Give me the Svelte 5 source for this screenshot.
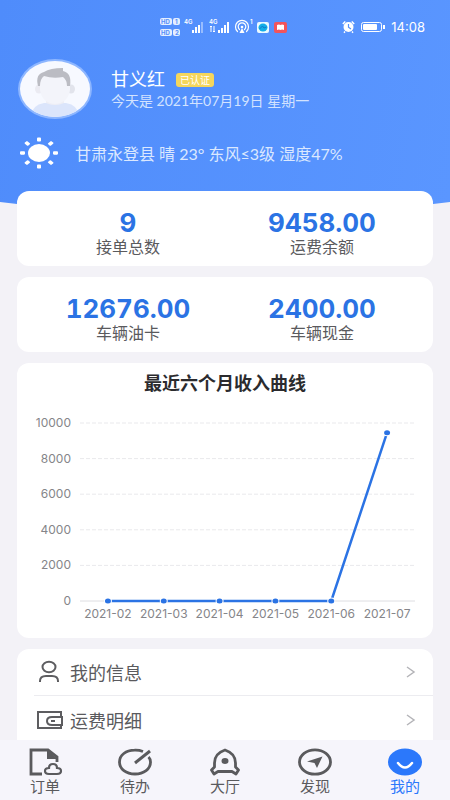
<script>
  const points = [
    { month: '2021-02', value: 0 },
    { month: '2021-03', value: 0 },
    { month: '2021-04', value: 0 },
    { month: '2021-05', value: 0 },
    { month: '2021-06', value: 0 },
    { month: '2021-07', value: 9458 }
  ];
  const ticks = [10000, 8000, 6000, 4000, 2000, 0];
  const left = 63;
  const right = 398;
  const top = 18;
  const base = 196;
  const step = (right - left) / points.length;
  const px = (i) => left + step * (i + 0.5);
  const py = (v) => base - ((base - top) * v) / 10000;
  const line = points.map((p, i) => `${px(i)},${py(p.value)}`).join(' ');

  const stats = [
    [
      { value: '9', label: '接单总数' },
      { value: '9458.00', label: '运费余额' }
    ],
    [
      { value: '12676.00', label: '车辆油卡' },
      { value: '2400.00', label: '车辆现金' }
    ]
  ];
  const menu = [
    { id: 'user', label: '我的信息' },
    { id: 'wallet', label: '运费明细' }
  ];
  const tabs = [
    { id: 'order', label: '订单' },
    { id: 'todo', label: '待办' },
    { id: 'hall', label: '大厅' },
    { id: 'find', label: '发现' },
    { id: 'mine', label: '我的' }
  ];
  const rays = [0, 45, 90, 135, 180, 225, 270, 315];
</script>

<div class="page">
  <header>
    <svg class="curve" viewBox="0 0 450 16" preserveAspectRatio="none" aria-hidden="true">
      <defs>
        <linearGradient id="sky">
          <stop offset="0" stop-color="#528ffc" />
          <stop offset="1" stop-color="#5a96ff" />
        </linearGradient>
      </defs>
      <path d="M0 0H450Q225 30 0 0Z" fill="url(#sky)" />
    </svg>

    <div class="status">
      <svg class="signals" width="130" height="22" viewBox="0 0 130 22" aria-hidden="true">
        <g fill="#e4eeff">
          <rect x="0" y="2" width="12" height="7" rx="2" />
          <rect x="13" y="2" width="7" height="7" rx="2" />
          <rect x="0" y="13" width="12" height="7" rx="2" />
          <rect x="13" y="13" width="7" height="7" rx="2" />
        </g>
        <g font-size="6" font-weight="700" fill="#5590fa">
          <text x="1" y="8">HD</text><text x="15" y="8">1</text>
          <text x="1" y="19">HD</text><text x="15" y="19">2</text>
        </g>
        <g font-size="6" font-weight="600" fill="#fff">
          <text x="24" y="8">4G</text><text x="49" y="8">4G</text><text x="90" y="8">1</text>
        </g>
        <g fill="#fff">
          <rect x="32" y="14" width="2" height="3" /><rect x="35" y="11" width="2" height="6" />
          <rect x="38" y="9" width="2" height="8" />
          <rect x="41" y="6" width="2" height="11" opacity=".4" />
          <rect x="58" y="14" width="2" height="3" /><rect x="61" y="12" width="2" height="5" />
          <rect x="64" y="9" width="2" height="8" /><rect x="67" y="6" width="2" height="11" />
        </g>
        <path d="M51 10v6m-1-5 1-1 1 1M54 10v6m-1-1 1 1 1-1" fill="none" stroke="#fff" />
        <g fill="none" stroke="#fff" stroke-width="1.2" stroke-linecap="round">
          <path d="M77.500 15.500a6.500 6.500 0 1 1 9 0" />
          <path d="M79.500 13.500a3.800 3.800 0 1 1 5 0" />
        </g>
        <circle cx="82" cy="11" r="1.300" fill="#fff" />
        <path d="m82 12 2.500 5h-5Z" fill="#fff" />
        <rect x="97" y="6" width="12" height="11" rx="2" fill="#eafaff" />
        <ellipse cx="103" cy="11.500" rx="4.500" ry="4" fill="#13aee8" />
        <path d="m99.500 13 3-3 1.500 2 2.500-1" fill="none" stroke="#1179c8" />
        <rect x="114" y="6" width="13" height="11" rx="2" fill="#f2545b" />
        <path d="M117 9q2-1 3.500 0 1.500-1 3.500 0v5q-2-1-3.500 0-1.500-1-3.500 0Z" fill="#fff" />
      </svg>
      <div class="power">
        <svg width="44" height="14" viewBox="0 0 44 14" aria-hidden="true">
          <circle cx="6.500" cy="7" r="5" fill="#fff" />
          <path d="m.8 4 2.500-2.500M12.200 4 9.700 1.500M3 11.500l-1 1.200m8-1.200 1 1.200" stroke="#fff" stroke-width="1.500" />
          <path d="M6.500 4v3.300L9 9" fill="none" stroke="#5590fa" stroke-width="1.200" />
          <rect x="19.500" y="2.500" width="20" height="9" rx="2" fill="none" stroke="#fff" />
          <rect x="21" y="4" width="14" height="6" rx="1" fill="#fff" />
          <path d="M42 5v4" stroke="#fff" stroke-width="2" />
        </svg>
        <time>14:08</time>
      </div>
    </div>

    <div class="profile">
      <svg class="avatar" width="74" height="60" viewBox="0 0 74 60" aria-hidden="true">
        <defs><clipPath id="face"><ellipse cx="37" cy="30" rx="35" ry="28" /></clipPath></defs>
        <ellipse cx="37" cy="30" rx="37" ry="30" fill="#8db6ff" />
        <g clip-path="url(#face)">
          <rect width="74" height="60" fill="#f7f9ff" />
          <path d="M12 60q1-14 14-16h22q13 2 14 16Z" fill="#dbe5fb" />
          <path d="M28 38h18v6q-9 4-18 0Z" fill="#efeff5" />
          <ellipse cx="21" cy="30" rx="4" ry="4.500" fill="#ebebf2" />
          <ellipse cx="53" cy="30" rx="4" ry="4.500" fill="#e2e4ec" />
          <path d="M22 18q15-6 30 0v13q-2 13-15 14-13-1-15-14Z" fill="#f3f4fa" />
          <path d="M20 27q-3-12 6-14 6-4 19-4v3q9 2 7 15h-3q0-6-4-9-10 2-19-1-4 3-4 10Z" fill="#bbbcc3" />
        </g>
      </svg>
      <div class="who">
        <div class="name-row">
          <h1>甘义红</h1>
          <span class="badge">已认证</span>
        </div>
        <p class="date">今天是 2021年07月19日 星期一</p>
      </div>
    </div>

    <div class="weather">
      <svg width="40" height="34" viewBox="-20 -17 40 34" aria-hidden="true">
        <ellipse rx="11" ry="9" fill="#fff" />
        <g transform="scale(1 .82)">
          {#each rays as angle}
            <rect x="14" y="-2" width="5" height="4" rx="1" fill="#fff" transform={`rotate(${angle})`} />
          {/each}
        </g>
      </svg>
      <p>甘肃永登县 晴 23° 东风≤3级 湿度47%</p>
    </div>
  </header>

  <main>
    {#each stats as row}
      <section class="card stats">
        {#each row as item}
          <div class="stat">
            <strong>{item.value}</strong>
            <span>{item.label}</span>
          </div>
        {/each}
      </section>
    {/each}

    <section class="card chart">
      <h2>最近六个月收入曲线</h2>
      <svg viewBox="0 0 416 225" role="img" aria-label="最近六个月收入曲线">
        {#each ticks as tick}
          <line
            x1={left} x2={right} y1={py(tick)} y2={py(tick)}
            stroke={tick ? '#e9e9ec' : '#dedee2'}
            stroke-dasharray={tick ? '4 2' : null}
          />
          <text x="54" y={py(tick) + 4} text-anchor="end">{tick}</text>
        {/each}
        <polyline points={line} fill="none" stroke="#2b73e4" stroke-width="2.500" />
        {#each points as point, i}
          <ellipse cx={px(i)} cy={py(point.value)} rx="3" ry="2.500" fill="#2b73e4" stroke="#fff" stroke-width="2" paint-order="stroke" />
          <text x={px(i)} y="213" text-anchor="middle">{point.month}</text>
        {/each}
      </svg>
    </section>

    <nav class="card menu">
      {#each menu as item}
        <a href={`#${item.id}`}>
          <svg width="28" height="24" viewBox="0 0 28 24" fill="none" stroke="#5d5d60" stroke-width="2" aria-hidden="true">
            {#if item.id === 'user'}
              <ellipse cx="14" cy="7" rx="6.500" ry="5.300" />
              <path d="M5 22v-1q0-5 6-5h6q6 0 6 5v1" />
            {:else}
              <rect x="3" y="4" width="23" height="16" />
              <path d="M27 9H17q-5 0-5 4t5 4h10Z" fill="#fff" />
              <path d="M16 13h4" />
            {/if}
          </svg>
          <span>{item.label}</span>
          <svg class="arrow" width="10" height="12" viewBox="0 0 10 12" fill="none" stroke="#b4b4b8" stroke-width="1.500" aria-hidden="true">
            <path d="m1 1 7 5-7 5" />
          </svg>
        </a>
      {/each}
    </nav>
  </main>

  <nav class="tabs">
    {#each tabs as tab}
      <a href={`#${tab.id}`} class:active={tab.id === 'mine'}>
        <svg width="36" height="28" viewBox="0 0 36 28" fill="none" stroke="#5a5a5d" stroke-width="2.800" aria-hidden="true">
          {#if tab.id === 'order'}
            <path d="M15 26H4V2h17l9 7v5" />
            <path d="M20 2v9h11Z" fill="#5a5a5d" stroke="none" />
            <path d="M22 26q-4 0-4-3t4-3q0-4 4-4t4 4q4 0 4 3t-4 3Z" stroke-width="2.200" />
          {:else if tab.id === 'todo'}
            <path d="M26 3.500Q22 2 17.500 2.200C9 2.300 2.500 7 2.500 14S9 26 18 26s15.500-5 15.500-12q0-3-2-5" />
            <path d="M18 15 33 3" stroke-width="3" />
          {:else if tab.id === 'hall'}
            <path d="M18 2C12 4 7.500 8 7.500 15v4L4.500 22l2.500 4 4-2.500h14l4 2.500 2.500-4-3-3v-4C28.500 8 24 4 18 2Z" stroke-linejoin="round" />
            <ellipse cx="18" cy="13" rx="3.500" ry="3" fill="#5a5a5d" stroke="none" />
          {:else if tab.id === 'find'}
            <ellipse cx="18" cy="14" rx="15.500" ry="12.200" />
            <path d="m25.500 8.500-5.500 11.500-2.500-5-7.500-1.500Z" fill="#5a5a5d" stroke="none" />
          {:else}
            <ellipse cx="18" cy="14" rx="17" ry="13.500" fill="#2b78fb" stroke="none" />
            <path d="M11 15q7 9 14 0" stroke="#fff" stroke-width="2.500" stroke-linecap="round" />
          {/if}
        </svg>
        <span>{tab.label}</span>
      </a>
    {/each}
  </nav>
</div>

<style>
  :global(body) {
    margin: 0;
    background: #f3f2f7;
  }
  .page {
    display: flex;
    flex-direction: column;
    min-height: 100vh;
    background: #f3f2f7;
    color: #5a5a5d;
    font-family: Inter, 'Noto Sans CJK SC', sans-serif;
  }
  h1, h2, p {
    margin: 0;
    font-weight: 400;
  }
  a {
    color: inherit;
    text-decoration: none;
  }
  header {
    position: relative;
    padding-bottom: 20px;
    background: linear-gradient(100deg, #4f8cfb, #5a96ff);
    color: #fff;
  }
  .curve {
    position: absolute;
    top: 100%;
    left: 0;
    width: 100%;
    height: 16px;
  }
  .status {
    display: flex;
    justify-content: space-between;
    align-items: center;
    height: 54px;
    padding: 0 25px 0 160px;
  }
  .power {
    display: flex;
    align-items: center;
    gap: 5px;
    font-size: 13px;
  }
  .profile {
    display: flex;
    align-items: center;
    gap: 19px;
    height: 70px;
    padding: 0 18px;
  }
  .name-row {
    display: flex;
    align-items: center;
    gap: 11px;
    height: 24px;
  }
  h1 {
    font-size: 18px;
    line-height: 24px;
  }
  .badge {
    padding: 0 4px;
    border-radius: 3px;
    background: #f5d65c;
    font-size: 10px;
    line-height: 14px;
  }
  .date {
    font-family: Lato, 'Noto Sans CJK SC', sans-serif;
    font-size: 14px;
    line-height: 18px;
    color: #d3e3ff;
  }
  .weather {
    display: flex;
    align-items: center;
    gap: 16px;
    height: 58px;
    padding: 0 19px;
    font-family: Lato, 'Noto Sans CJK SC', sans-serif;
    font-size: 16px;
    color: #dbe8ff;
  }
  main {
    position: relative;
    display: flex;
    flex: 1;
    flex-direction: column;
    gap: 11px;
    margin-top: -11px;
    padding: 0 17px;
  }
  .card {
    border-radius: 12px;
    background: #fff;
  }
  .stats {
    display: grid;
    grid-template-columns: 1fr 1fr;
    padding: 19px 14px 8px;
  }
  .stat {
    display: flex;
    flex-direction: column;
    align-items: center;
  }
  .stat strong {
    font-size: 26px;
    line-height: 26px;
    font-weight: 700;
    font-variant-numeric: tabular-nums;
    color: #2b73e4;
  }
  .stat span {
    font-size: 16px;
    line-height: 22px;
  }
  .chart {
    padding: 8px 0;
  }
  .chart h2 {
    padding-bottom: 8px;
    font-size: 18px;
    line-height: 26px;
    font-weight: 700;
    text-align: center;
    color: #2b2b2e;
  }
  .chart svg {
    display: block;
    width: 100%;
  }
  .chart text {
    font-size: 12px;
    fill: #858589;
  }
  .menu {
    flex: 1;
    border-radius: 12px 12px 0 0;
  }
  .menu a {
    display: flex;
    align-items: center;
    gap: 7px;
    box-sizing: border-box;
    height: 46px;
    padding: 0 17px 0 18px;
    font-size: 18px;
  }
  .menu a + a {
    height: 45px;
    margin-left: 17px;
    padding: 4px 17px 0 1px;
    border-top: 1px solid #ececf0;
  }
  .menu .arrow {
    margin-left: auto;
  }
  .tabs {
    position: sticky;
    bottom: 0;
    display: flex;
    height: 60px;
    background: #f6f5fb;
  }
  .tabs a {
    display: flex;
    flex: 1;
    flex-direction: column;
    align-items: center;
    padding-top: 8px;
    font-size: 15px;
    line-height: 22px;
  }
  .tabs .active {
    color: #2b78fb;
  }
</style>
